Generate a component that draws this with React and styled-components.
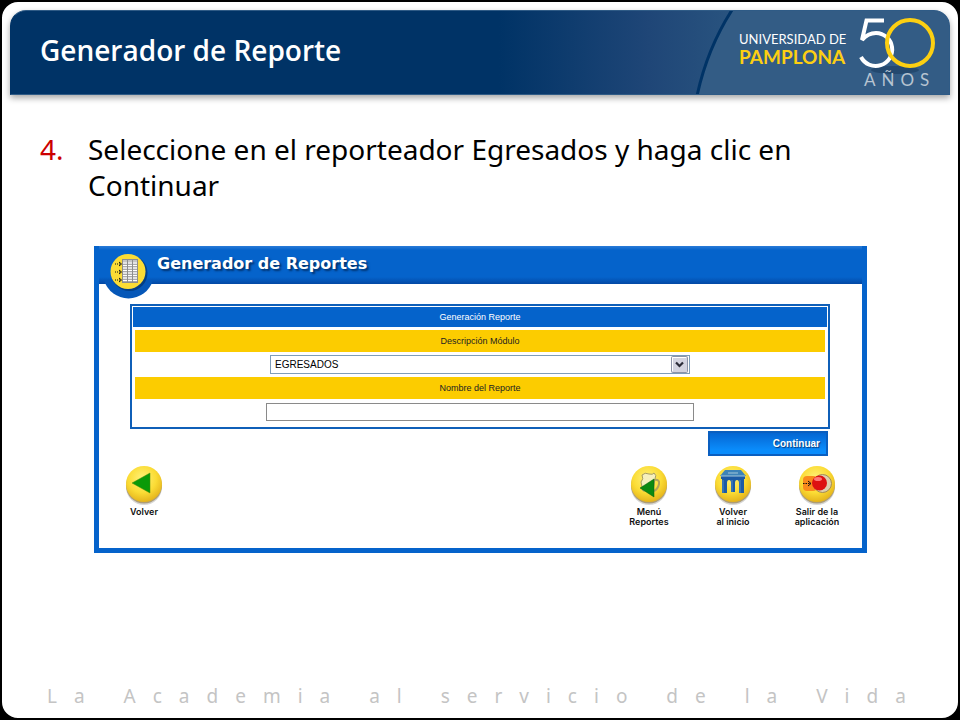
import React from "react";
import styled, { createGlobalStyle } from "styled-components";

const GlobalStyle = createGlobalStyle`
  *{
    box-sizing: border-box;
  }
  body{
    margin: 0;
    background: #000;
    font-family: "Trebuchet MS", "Noto Sans", sans-serif;
  }
`;

const Slide = styled.main`
  display: flex;
  flex-direction: column;
  min-height: 100vh;
  border: 2px solid #000;
  border-radius: 18px;
  background: #fff;
  padding: 8px;
`;

const Header = styled.header`
  display: flex;
  align-items: flex-start;
  justify-content: space-between;
  height: 85px;
  border: 1px solid #2f5b86;
  border-left-color: #003366;
  border-radius: 16px 16px 0 0;
  background: linear-gradient(90deg, #003366 0%, #003366 52%, #1f4677 68%, #2a5580 78%);
  box-shadow: 0 3px 6px rgba(0,0,0,0.35);
  overflow: hidden;
  h1{
    margin: 0;
    padding: 21px 0 0 29px;
    color: #fff;
    font-family: "Trebuchet MS", "Open Sans", sans-serif;
    font-size: 28px;
    line-height: 36px;
    font-weight: 600;
  }
  svg{
    display: block;
    height: 84px;
    width: 256px;
    flex: none;
  }
`;

const Steps = styled.ol`
  margin: 36px 100px 0 30px;
  padding: 0;
  list-style: none;
  li{
    display: flex;
    font-size: 28px;
    line-height: 36px;
  }
  span{
    flex: none;
    width: 48px;
    color: #cc0000;
  }
`;

const Panel = styled.section`
  margin: 43px 83px 0 84px;
  border: 5px solid #0563cb;
  border-top: 0;
  background: #fff;
  font-family: "Liberation Sans", Arial, sans-serif;
`;

const PanelHeader = styled.div`
  display: flex;
  height: 38px;
  background: linear-gradient(#2a7bd8 0px, #0563cb 4px, #0563cb 31px, #0348a4 38px);
  svg{
    flex: none;
    width: 58px;
    height: 54px;
  }
  h2{
    margin: 0;
    color: #fff;
    font-family: Verdana, "DejaVu Sans", sans-serif;
    font-size: 16px;
    line-height: 36px;
    text-shadow: 2px 2px 2px #02336f;
  }
`;

const Form = styled.form`
  display: flex;
  flex-direction: column;
  margin: 20px 32px 0 31px;
`;

const Frame = styled.div`
  display: flex;
  flex-direction: column;
  align-items: center;
  border: 2px solid #0f5fb8;
  padding: 1px;
  font-size: 9px;
  h3{
    align-self: stretch;
    margin: 0;
    background: #0563cb;
    color: #fff;
    font-size: 9px;
    font-weight: 400;
    line-height: 20px;
    text-align: center;
  }
`;

const Label = styled.label`
  align-self: stretch;
  margin: 3px 2px;
  background: #fccc00;
  color: #222;
  line-height: 22px;
  text-align: center;
`;

const SelectBox = styled.div`
  display: grid;
  width: 420px;
  max-width: 100%;
  height: 19px;
  border: 1px solid #7f9db9;
  select, svg{
    grid-area: 1 / 1;
  }
  select{
    appearance: none;
    width: 100%;
    border: 0;
    padding: 0 20px 0 4px;
    background: #fff;
    color: #000;
    font-family: inherit;
    font-size: 10px;
  }
  svg{
    justify-self: end;
    width: 18px;
    height: 17px;
    pointer-events: none;
  }
`;

const TextInput = styled.input`
  width: 428px;
  max-width: 100%;
  height: 18px;
  margin: 1px 0 5px;
  border: 1px solid #8a8a8a;
  padding: 0 4px;
  background: #fff;
  font-family: inherit;
  font-size: 10px;
`;

const Submit = styled.button`
  align-self: flex-end;
  width: 120px;
  height: 25px;
  margin: 2px 2px 0 0;
  border: 2px solid #0a5fc0;
  padding: 0 6px;
  background: linear-gradient(#0566d2, #0a8cfb 80%);
  color: #fff;
  font-family: "Liberation Sans", Arial, sans-serif;
  font-size: 10px;
  font-weight: 700;
  text-align: right;
  text-shadow: 1px 1px 1px #033a7c;
`;

const Nav = styled.nav`
  display: flex;
  align-items: flex-start;
  justify-content: flex-end;
  padding: 7px 3px 21px;
`;

const NavLink = styled.a`
  display: flex;
  flex-direction: column;
  align-items: center;
  width: 84px;
  margin-right: ${props => (props.$first ? "auto" : "0")};
  color: #111;
  font-family: Inter, "Liberation Sans", sans-serif;
  font-size: 9px;
  line-height: 10px;
  font-weight: 600;
  text-align: center;
  text-decoration: none;
  white-space: pre-line;
  svg{
    width: 44px;
    height: 44px;
  }
`;

const Motto = styled.footer`
  margin-top: auto;
  padding-left: 37px;
  color: #c4c4c4;
  font-size: 19px;
  line-height: 28px;
  letter-spacing: 17px;
  white-space: nowrap;
`;

function Logo(){
  return(
    <svg viewBox="0 0 256 84" role="img" aria-label="Universidad de Pamplona 50 años">
      <path d="M39 0 Q14 38 4 84 H256 V0 Z" fill="#335c85" />
      <path d="M39 -1 Q14 38 4 85" fill="none" stroke="#003366" strokeWidth="3" />
      <g fontFamily="Lato, sans-serif">
        <text x="46" y="33" fontSize="13" fill="#fff">UNIVERSIDAD DE</text>
        <text x="46" y="53" fontSize="19" fontWeight="700" fill="#fccf12">PAMPLONA</text>
      </g>
      <ellipse cx="202" cy="59" rx="24" ry="4" fill="#24496f" />
      <path d="M191 9.500 H173.500 L169 29 Q175 22 183 22 A16.500 16.500 0 1 1 168 46" fill="none" stroke="#fff" strokeWidth="4" />
      <circle cx="217" cy="32" r="23" fill="none" stroke="#fccf12" strokeWidth="4" />
      <text x="171" y="75" fontFamily="Lato, sans-serif" fontSize="17" fontWeight="400" letterSpacing="6" fill="#b7c4d1">AÑOS</text>
    </svg>
  );
}

function Coin({ id, children }){
  return(
    <svg viewBox="0 0 44 44" aria-hidden="true">
      <defs>
        <radialGradient id={id} cx="45%" cy="35%" r="65%">
          <stop offset="0" stopColor="#fff27a" />
          <stop offset="0.6" stopColor="#fbdc35" />
          <stop offset="1" stopColor="#e5b41c" />
        </radialGradient>
      </defs>
      <circle cx="22" cy="24" r="18" fill="#000" opacity="0.16" />
      <circle cx="22" cy="22.500" r="18" fill="#9a8550" opacity="0.7" />
      <circle cx="22" cy="21" r="18" fill={`url(#${id})`} />
      {children}
    </svg>
  );
}

function ReportIcon(){
  return(
    <svg viewBox="0 0 58 54" aria-hidden="true">
      <path d="M5 34A25.500 25.500 0 0 0 54 34Z" fill="#0557b8" />
      <circle cx="30.500" cy="27" r="18" fill="#02336f" opacity="0.7" />
      <circle cx="29" cy="25.500" r="17.500" fill="#fbdc35" />
      <rect x="23" y="13" width="16" height="24" fill="#8d8d8d" />
      <path d="M24 14.500h4v1h-4zm5 0h4v1h-4zm5 0h4v1h-4z" fill="#fff" />
      <g stroke="#fff" strokeWidth="1.400" strokeDasharray="4 1">
        {[17, 19.5, 22, 24.5, 27, 29.5, 32, 34.5].map(y => <path key={y} d={`M24 ${y}h14`} />)}
      </g>
      <g fill="none" stroke="#111" strokeWidth="1">
        {[18, 26, 34].map(y => (
          <g key={y}>
            <path d={`M16 ${y}h6`} strokeDasharray="1 1" />
            <path d={`M20 ${y - 2}l2.500 2l-2.500 2`} />
          </g>
        ))}
      </g>
    </svg>
  );
}

function App(){
  return(
    <>
      <GlobalStyle />
      <Slide>
        <Header>
          <h1>Generador de Reporte</h1>
          <Logo />
        </Header>
        <Steps>
          <li><span>4.</span>Seleccione en el reporteador Egresados y haga clic en Continuar</li>
        </Steps>
        <Panel>
          <PanelHeader>
            <ReportIcon />
            <h2>Generador de Reportes</h2>
          </PanelHeader>
          <Form onSubmit={e => e.preventDefault()}>
            <Frame>
              <h3>Generación Reporte</h3>
              <Label htmlFor="modulo">Descripción Módulo</Label>
              <SelectBox>
                <select id="modulo">
                  <option>EGRESADOS</option>
                </select>
                <svg viewBox="0 0 18 17" aria-hidden="true">
                  <rect x="0.500" y="0.500" width="16" height="16" rx="1" fill="#d3d3e0" stroke="#8d93a8" />
                  <path d="M1.500 15V1.500H15" fill="none" stroke="#fff" />
                  <path d="M5 6.500l3.500 3.500l3.500-3.500" fill="none" stroke="#2b2b38" strokeWidth="2.200" />
                </svg>
              </SelectBox>
              <Label htmlFor="nombre">Nombre del Reporte</Label>
              <TextInput id="nombre" type="text" />
            </Frame>
            <Submit type="submit">Continuar</Submit>
          </Form>
          <Nav>
            <NavLink href="#volver" $first>
              <Coin id="coinBack">
                <path d="M10 20L28 10v20z" fill="#0a9a08" stroke="#4d8a0a" strokeWidth="0.500" />
              </Coin>
              Volver
            </NavLink>
            <NavLink href="#menu">
              <Coin id="coinMenu">
                <path d="M14 19Q17 16 15 12Q18 9 22 11Q26 12 27 10Q30 12 28 16L26 27L16 28Z" fill="#f6f0bd" stroke="#a59c62" />
                <path d="M27 17Q33 16 32 21Q31 26 27 28" fill="none" stroke="#b0a35c" strokeWidth="2" />
                <path d="M13 25L27 16v18z" fill="#0b8a12" stroke="#075c0c" strokeWidth="0.500" />
              </Coin>
              {"Menú\nReportes"}
            </NavLink>
            <NavLink href="#inicio">
              <Coin id="coinHome">
                <path d="M14 7H30L35 13H9Z" fill="#3d83b8" />
                <path d="M10 13H34V16H33V30H28V20Q28 17 26 17Q24 17 24 20V29H20V20Q20 17 18 17Q16 17 16 20V30H11V16H10Z" fill="#1c5ba5" />
                <path d="M10 13H34M17 10H27" stroke="#a5c8d8" />
                <path d="M12 17V30M21 17V29M29 17V30" stroke="#4f8cc4" />
              </Coin>
              {"Volver\nal inicio"}
            </NavLink>
            <NavLink href="#salir">
              <Coin id="coinExit">
                <rect x="8" y="13" width="14" height="15" rx="4" fill="#f98a1c" />
                <circle cx="27.500" cy="20.500" r="9" fill="#dccfb0" stroke="#a08a58" />
                <circle cx="24.500" cy="20" r="7.500" fill="#dd1111" />
                <ellipse cx="23" cy="16" rx="4" ry="2" fill="#f77" />
                <path d="M8 20.500h8" stroke="#111" strokeDasharray="1.500 1" />
                <path d="M13 18l3 2.500l-3 2.500" fill="none" stroke="#111" />
              </Coin>
              {"Salir de la\naplicación"}
            </NavLink>
          </Nav>
        </Panel>
        <Motto>La Academia al servicio de la Vida</Motto>
      </Slide>
    </>
  );
}

export default App;
